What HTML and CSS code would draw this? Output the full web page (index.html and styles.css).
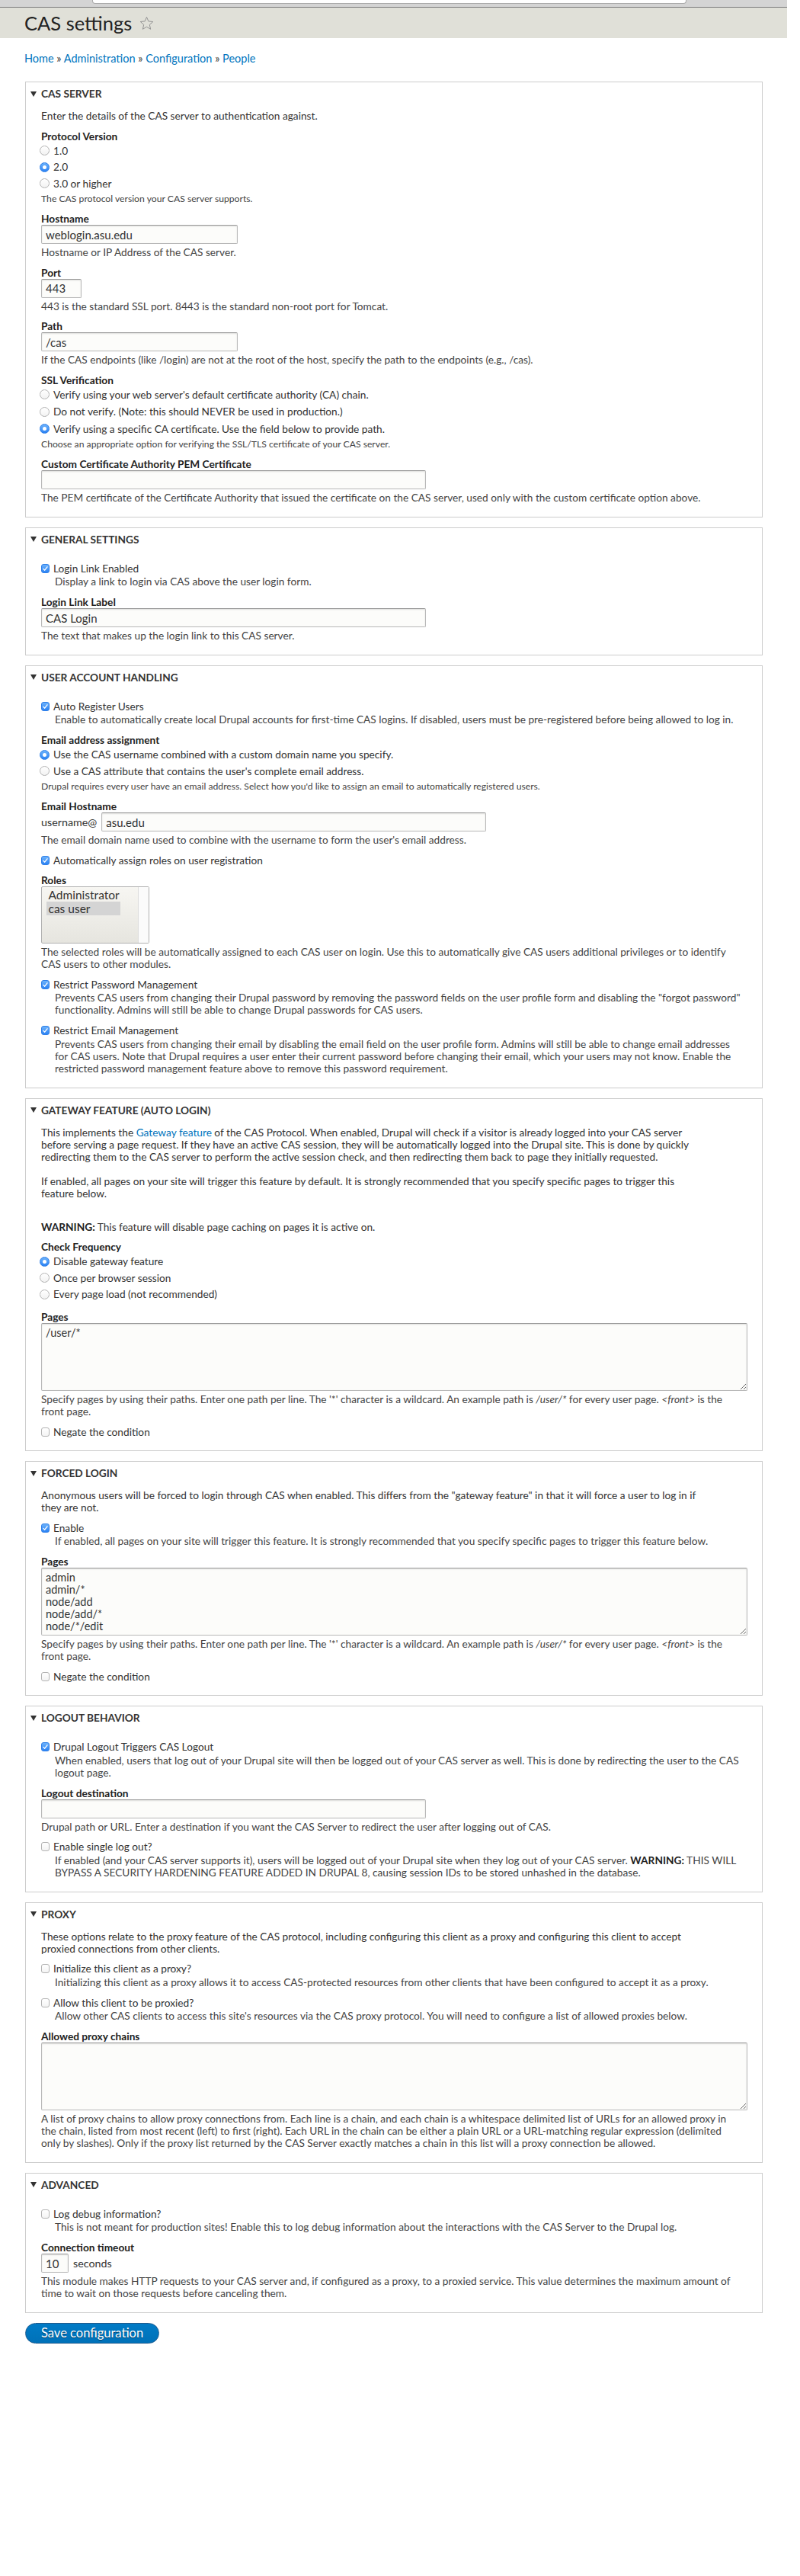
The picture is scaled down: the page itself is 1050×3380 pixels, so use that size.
FILE: index.html
```html
<!DOCTYPE html>
<html lang="en">
<head>
<meta charset="utf-8">
<title>CAS settings</title>
<link rel="stylesheet" href="styles.css">
</head>
<body>
<div class="page">
  <div class="topbar"><div class="topbar-field"></div></div>
  <header class="header">
    <h1 class="title">CAS settings</h1>
    <svg class="star" viewBox="0 0 20 20" width="19" height="19"><polygon points="10,1.5 12.5,7.3 18.7,7.9 14,12 15.4,18.2 10,15 4.6,18.2 6,12 1.3,7.9 7.5,7.3"/></svg>
  </header>
  <nav class="crumbs"><a href="#">Home</a> » <a href="#">Administration</a> » <a href="#">Configuration</a> » <a href="#">People</a></nav>

  <main class="main">
    <!-- CAS SERVER -->
    <section class="fs">
      <div class="fs-title"><span class="tri"></span>CAS Server</div>
      <p class="intro">Enter the details of the CAS server to authentication against.</p>
      <div class="item">
        <div class="label">Protocol Version</div>
        <div class="radios">
          <div class="radio"><span class="rb"></span>1.0</div>
          <div class="radio"><span class="rb on"></span>2.0</div>
          <div class="radio"><span class="rb"></span>3.0 or higher</div>
        </div>
        <div class="desc-sm">The CAS protocol version your CAS server supports.</div>
      </div>
      <div class="item">
        <div class="label">Hostname</div>
        <input class="input w-258" type="text" value="weblogin.asu.edu">
        <div class="desc">Hostname or IP Address of the CAS server.</div>
      </div>
      <div class="item">
        <div class="label">Port</div>
        <input class="input w-53" type="text" value="443">
        <div class="desc">443 is the standard SSL port. 8443 is the standard non-root port for Tomcat.</div>
      </div>
      <div class="item">
        <div class="label">Path</div>
        <input class="input w-258" type="text" value="/cas">
        <div class="desc">If the CAS endpoints (like /login) are not at the root of the host, specify the path to the endpoints (e.g., /cas).</div>
      </div>
      <div class="item">
        <div class="label">SSL Verification</div>
        <div class="radios wide">
          <div class="radio"><span class="rb"></span>Verify using your web server's default certificate authority (CA) chain.</div>
          <div class="radio"><span class="rb"></span>Do not verify. (Note: this should NEVER be used in production.)</div>
          <div class="radio"><span class="rb on"></span>Verify using a specific CA certificate. Use the field below to provide path.</div>
        </div>
        <div class="desc-sm">Choose an appropriate option for verifying the SSL/TLS certificate of your CAS server.</div>
      </div>
      <div class="item">
        <div class="label">Custom Certificate Authority PEM Certificate</div>
        <input class="input w-505" type="text" value="">
        <div class="desc">The PEM certificate of the Certificate Authority that issued the certificate on the CAS server, used only with the custom certificate option above.</div>
      </div>
    </section>

    <!-- GENERAL SETTINGS -->
    <section class="fs">
      <div class="fs-title"><span class="tri"></span>General Settings</div>
      <div class="item lead">
        <div class="check"><span class="cb on"><svg viewBox="0 0 11 12"><path d="M2.4 6.4 4.5 8.7 8.6 3.3"/></svg></span>Login Link Enabled</div>
        <div class="cdesc">Display a link to login via CAS above the user login form.</div>
      </div>
      <div class="item">
        <div class="label">Login Link Label</div>
        <input class="input w-505" type="text" value="CAS Login">
        <div class="desc">The text that makes up the login link to this CAS server.</div>
      </div>
    </section>

    <!-- USER ACCOUNT HANDLING -->
    <section class="fs">
      <div class="fs-title"><span class="tri"></span>User Account Handling</div>
      <div class="item lead">
        <div class="check"><span class="cb on"><svg viewBox="0 0 11 12"><path d="M2.4 6.4 4.5 8.7 8.6 3.3"/></svg></span>Auto Register Users</div>
        <div class="cdesc">Enable to automatically create local Drupal accounts for first-time CAS logins. If disabled, users must be pre-registered before being allowed to log in.</div>
      </div>
      <div class="item">
        <div class="label">Email address assignment</div>
        <div class="radios">
          <div class="radio"><span class="rb on"></span>Use the CAS username combined with a custom domain name you specify.</div>
          <div class="radio"><span class="rb"></span>Use a CAS attribute that contains the user's complete email address.</div>
        </div>
        <div class="desc-sm">Drupal requires every user have an email address. Select how you'd like to assign an email to automatically registered users.</div>
      </div>
      <div class="item">
        <div class="label">Email Hostname</div>
        <div class="field-row"><span class="affix">username@</span><input class="input w-505" type="text" value="asu.edu"></div>
        <div class="desc">The email domain name used to combine with the username to form the user's email address.</div>
      </div>
      <div class="item">
        <div class="check"><span class="cb on"><svg viewBox="0 0 11 12"><path d="M2.4 6.4 4.5 8.7 8.6 3.3"/></svg></span>Automatically assign roles on user registration</div>
      </div>
      <div class="item">
        <div class="label">Roles</div>
        <div class="select">
          <div class="opts">
            <div class="opt">Administrator</div>
            <div class="opt sel">cas user</div>
          </div>
          <div class="scroll"></div>
        </div>
        <div class="desc">The selected roles will be automatically assigned to each CAS user on login. Use this to automatically give CAS users additional privileges or to identify<br>CAS users to other modules.</div>
      </div>
      <div class="item">
        <div class="check"><span class="cb on"><svg viewBox="0 0 11 12"><path d="M2.4 6.4 4.5 8.7 8.6 3.3"/></svg></span>Restrict Password Management</div>
        <div class="cdesc">Prevents CAS users from changing their Drupal password by removing the password fields on the user profile form and disabling the "forgot password"<br>functionality. Admins will still be able to change Drupal passwords for CAS users.</div>
      </div>
      <div class="item">
        <div class="check"><span class="cb on"><svg viewBox="0 0 11 12"><path d="M2.4 6.4 4.5 8.7 8.6 3.3"/></svg></span>Restrict Email Management</div>
        <div class="cdesc">Prevents CAS users from changing their email by disabling the email field on the user profile form. Admins will still be able to change email addresses<br>for CAS users. Note that Drupal requires a user enter their current password before changing their email, which your users may not know. Enable the<br>restricted password management feature above to remove this password requirement.</div>
      </div>
    </section>

    <!-- GATEWAY -->
    <section class="fs">
      <div class="fs-title"><span class="tri"></span>Gateway Feature (Auto Login)</div>
      <p class="intro">This implements the <a href="#">Gateway feature</a> of the CAS Protocol. When enabled, Drupal will check if a visitor is already logged into your CAS server<br>before serving a page request. If they have an active CAS session, they will be automatically logged into the Drupal site. This is done by quickly<br>redirecting them to the CAS server to perform the active session check, and then redirecting them back to page they initially requested.</p>
      <p class="p2">If enabled, all pages on your site will trigger this feature by default. It is strongly recommended that you specify specific pages to trigger this<br>feature below.</p>
      <p class="warn"><b>WARNING:</b> This feature will disable page caching on pages it is active on.</p>
      <div class="item">
        <div class="label">Check Frequency</div>
        <div class="radios">
          <div class="radio"><span class="rb on"></span>Disable gateway feature</div>
          <div class="radio"><span class="rb"></span>Once per browser session</div>
          <div class="radio"><span class="rb"></span>Every page load (not recommended)</div>
        </div>
      </div>
      <div class="item after-radios">
        <div class="label">Pages</div>
        <textarea class="textarea">/user/*</textarea>
        <div class="desc">Specify pages by using their paths. Enter one path per line. The '*' character is a wildcard. An example path is <em>/user/*</em> for every user page. <em>&lt;front&gt;</em> is the<br>front page.</div>
      </div>
      <div class="item">
        <div class="check"><span class="cb"></span>Negate the condition</div>
      </div>
    </section>

    <!-- FORCED LOGIN -->
    <section class="fs">
      <div class="fs-title"><span class="tri"></span>Forced Login</div>
      <p class="intro">Anonymous users will be forced to login through CAS when enabled. This differs from the "gateway feature" in that it will force a user to log in if<br>they are not.</p>
      <div class="item">
        <div class="check"><span class="cb on"><svg viewBox="0 0 11 12"><path d="M2.4 6.4 4.5 8.7 8.6 3.3"/></svg></span>Enable</div>
        <div class="cdesc">If enabled, all pages on your site will trigger this feature. It is strongly recommended that you specify specific pages to trigger this feature below.</div>
      </div>
      <div class="item">
        <div class="label">Pages</div>
        <textarea class="textarea">admin
admin/*
node/add
node/add/*
node/*/edit</textarea>
        <div class="desc">Specify pages by using their paths. Enter one path per line. The '*' character is a wildcard. An example path is <em>/user/*</em> for every user page. <em>&lt;front&gt;</em> is the<br>front page.</div>
      </div>
      <div class="item">
        <div class="check"><span class="cb"></span>Negate the condition</div>
      </div>
    </section>

    <!-- LOGOUT -->
    <section class="fs">
      <div class="fs-title"><span class="tri"></span>Logout Behavior</div>
      <div class="item lead">
        <div class="check"><span class="cb on"><svg viewBox="0 0 11 12"><path d="M2.4 6.4 4.5 8.7 8.6 3.3"/></svg></span>Drupal Logout Triggers CAS Logout</div>
        <div class="cdesc">When enabled, users that log out of your Drupal site will then be logged out of your CAS server as well. This is done by redirecting the user to the CAS<br>logout page.</div>
      </div>
      <div class="item">
        <div class="label">Logout destination</div>
        <input class="input w-505" type="text" value="">
        <div class="desc">Drupal path or URL. Enter a destination if you want the CAS Server to redirect the user after logging out of CAS.</div>
      </div>
      <div class="item">
        <div class="check"><span class="cb"></span>Enable single log out?</div>
        <div class="cdesc">If enabled (and your CAS server supports it), users will be logged out of your Drupal site when they log out of your CAS server. <b>WARNING:</b> THIS WILL<br>BYPASS A SECURITY HARDENING FEATURE ADDED IN DRUPAL 8, causing session IDs to be stored unhashed in the database.</div>
      </div>
    </section>

    <!-- PROXY -->
    <section class="fs">
      <div class="fs-title"><span class="tri"></span>Proxy</div>
      <p class="intro">These options relate to the proxy feature of the CAS protocol, including configuring this client as a proxy and configuring this client to accept<br>proxied connections from other clients.</p>
      <div class="item">
        <div class="check"><span class="cb"></span>Initialize this client as a proxy?</div>
        <div class="cdesc">Initializing this client as a proxy allows it to access CAS-protected resources from other clients that have been configured to accept it as a proxy.</div>
      </div>
      <div class="item">
        <div class="check"><span class="cb"></span>Allow this client to be proxied?</div>
        <div class="cdesc">Allow other CAS clients to access this site's resources via the CAS proxy protocol. You will need to configure a list of allowed proxies below.</div>
      </div>
      <div class="item">
        <div class="label">Allowed proxy chains</div>
        <textarea class="textarea"></textarea>
        <div class="desc">A list of proxy chains to allow proxy connections from. Each line is a chain, and each chain is a whitespace delimited list of URLs for an allowed proxy in<br>the chain, listed from most recent (left) to first (right). Each URL in the chain can be either a plain URL or a URL-matching regular expression (delimited<br>only by slashes). Only if the proxy list returned by the CAS Server exactly matches a chain in this list will a proxy connection be allowed.</div>
      </div>
    </section>

    <!-- ADVANCED -->
    <section class="fs">
      <div class="fs-title"><span class="tri"></span>Advanced</div>
      <div class="item lead">
        <div class="check"><span class="cb"></span>Log debug information?</div>
        <div class="cdesc">This is not meant for production sites! Enable this to log debug information about the interactions with the CAS Server to the Drupal log.</div>
      </div>
      <div class="item">
        <div class="label">Connection timeout</div>
        <div class="field-row"><input class="input w-36" type="text" value="10"><span class="affix">seconds</span></div>
        <div class="desc">This module makes HTTP requests to your CAS server and, if configured as a proxy, to a proxied service. This value determines the maximum amount of<br>time to wait on those requests before canceling them.</div>
      </div>
    </section>

    <button class="btn" type="button">Save configuration</button>
  </main>
</div>
</body>
</html>
```

FILE: styles.css
```css
* {
  box-sizing: border-box;
}

html,
body {
  margin: 0;
  padding: 0;
}

body {
  background: #fff;
  font-family: Lato, "Liberation Sans", Arial, sans-serif;
  font-size: 13.7px;
  line-height: 16px;
  color: #333;
}

p {
  margin: 0;
}

.page {
  width: 1033px;
}

/* browser-ish strip at the very top */
.topbar {
  height: 10px;
  background: #d4d4d4;
  border-bottom: 1px solid #7b7b7b;
}

.topbar-field {
  margin-left: 121px;
  width: 780px;
  height: 5px;
  background: #fff;
  border: 1px solid #a9a9a9;
  border-top: 0;
  border-radius: 0 0 4px 4px;
}

.header {
  height: 40px;
  background: #e0e0d8;
  display: flex;
  align-items: center;
  gap: 10px;
  padding-left: 32px;
}

.title {
  margin: 0;
  font-size: 25.5px;
  line-height: 30px;
  font-weight: 400;
  color: #222;
}

.star {
  display: block;
  fill: none;
  stroke: #8f8f8f;
  stroke-width: 1;
}

.crumbs {
  padding: 19px 32px 0;
  margin-bottom: 22px;
  font-size: 14.5px;
  line-height: 16px;
  color: #333;
}

.crumbs a,
.intro a {
  color: #0074bd;
  text-decoration: none;
}

.main {
  padding: 0 32px 40px 33px;
}

/* fieldsets */
.fs {
  border: 1px solid #ccc;
  padding: 0 19px 16.5px 20px;
  margin-bottom: 13px;
}

.fs-title {
  display: flex;
  align-items: center;
  gap: 6px;
  margin-left: -14px;
  padding-top: 7px;
  line-height: 16px;
  font-weight: 700;
  text-transform: uppercase;
  color: #333;
}

.tri {
  width: 0;
  height: 0;
  border-left: 4px solid transparent;
  border-right: 4px solid transparent;
  border-top: 7px solid #333;
}

.intro,
.p2,
.warn,
.desc,
.cdesc,
.desc-sm {
  white-space: nowrap;
}

.intro {
  margin-top: 13px;
}

.p2 {
  margin-top: 16px;
}

.warn {
  margin-top: 28px;
}

.warn b,
.cdesc b {
  font-weight: 700;
  color: #222;
}

.item {
  margin-top: 10.5px;
}

.item.lead {
  margin-top: 22px;
}

.item.after-radios {
  margin-top: 14px;
}

.label {
  font-weight: 700;
  color: #222;
}

.desc {
  margin-top: 3px;
  color: #444;
}

.desc-sm {
  margin-top: 5px;
  padding-bottom: 1px;
  font-size: 12.2px;
  line-height: 14px;
  color: #444;
}

/* text inputs */
.input {
  display: block;
  height: 25px;
  margin: 0;
  padding: 0 5px;
  border: 1px solid #b8b8b8;
  border-top-color: #999;
  border-radius: 2px;
  background: #fcfcfa;
  box-shadow: inset 0 1px 2px rgba(0, 0, 0, 0.125);
  font-family: Lato, "Liberation Sans", Arial, sans-serif;
  font-size: 15px;
  color: #333;
  outline: none;
}

.w-258 { width: 258px; }
.w-53 { width: 53px; }
.w-505 { width: 505px; }
.w-36 { width: 36px; }

.field-row {
  display: flex;
  align-items: center;
  gap: 6px;
}

.affix {
  font-size: 14.3px;
  color: #333;
}

.textarea {
  display: block;
  width: 927px;
  height: 89px;
  margin: 0;
  padding: 4px 5px;
  border: 1px solid #b8b8b8;
  border-top-color: #999;
  border-radius: 2px;
  background: #fcfcfa;
  box-shadow: inset 0 1px 2px rgba(0, 0, 0, 0.125);
  font-family: Lato, "Liberation Sans", Arial, sans-serif;
  font-size: 14.5px;
  line-height: 16px;
  color: #333;
  resize: vertical;
  outline: none;
}

/* radios */
.radios {
  margin-top: 3px;
}

.radio {
  display: flex;
  align-items: center;
  gap: 5px;
  margin-left: -2px;
  white-space: nowrap;
}

.radio + .radio {
  margin-top: 5.5px;
}

.radios.wide .radio + .radio {
  margin-top: 6.5px;
}

.rb {
  flex: none;
  width: 13px;
  height: 13px;
  border-radius: 50%;
  border: 1px solid #b3b3b3;
  background: linear-gradient(#fff, #f2f2f2);
}

.rb.on {
  display: flex;
  align-items: center;
  justify-content: center;
  border-color: #2f7fe8;
  background: linear-gradient(#6cb2fb, #2c83f4);
}

.rb.on::after {
  content: "";
  width: 5px;
  height: 5px;
  border-radius: 50%;
  background: #fff;
}

/* checkboxes */
.check {
  display: flex;
  align-items: center;
  gap: 5px;
  white-space: nowrap;
}

.cb {
  flex: none;
  display: flex;
  width: 11px;
  height: 12px;
  border-radius: 3px;
  border: 1px solid #b3b3b3;
  background: linear-gradient(#fff, #f4f4f4);
}

.cb.on {
  border-color: #2f7fe8;
  background: linear-gradient(#6cb2fb, #2c83f4);
}

.cb svg {
  width: 100%;
  height: 100%;
  fill: none;
  stroke: #fff;
  stroke-width: 1.6;
  stroke-linecap: round;
  stroke-linejoin: round;
}

.cdesc {
  margin-top: 1.5px;
  padding-bottom: 0.5px;
  padding-left: 18px;
  color: #444;
}

/* multi select */
.select {
  display: flex;
  width: 142px;
  height: 75px;
  border: 1px solid #b0b0b0;
  border-radius: 2px;
  background: linear-gradient(#f7f6f2, #e6e5df);
}

.opts {
  flex: 1;
  padding: 1px 0 0 6px;
}

.opt {
  width: 97px;
  height: 18px;
  line-height: 18px;
  padding-left: 2.5px;
  font-size: 15.5px;
  color: #333;
}

.opt.sel {
  background: #d4d4d4;
}

.scroll {
  width: 14px;
  background: #fbfbfb;
  border-left: 1px solid #dcdcdc;
}

/* primary button */
.btn {
  display: block;
  height: 27px;
  margin: 0;
  padding: 0 20px;
  border: 1px solid #1e5c90;
  border-radius: 20px;
  background: linear-gradient(#007bc6, #0071b8);
  color: #fff;
  font-family: Lato, "Liberation Sans", Arial, sans-serif;
  font-size: 16.5px;
  line-height: 25px;
  text-shadow: 0 1px rgba(0, 0, 0, 0.5);
  cursor: pointer;
}
```
